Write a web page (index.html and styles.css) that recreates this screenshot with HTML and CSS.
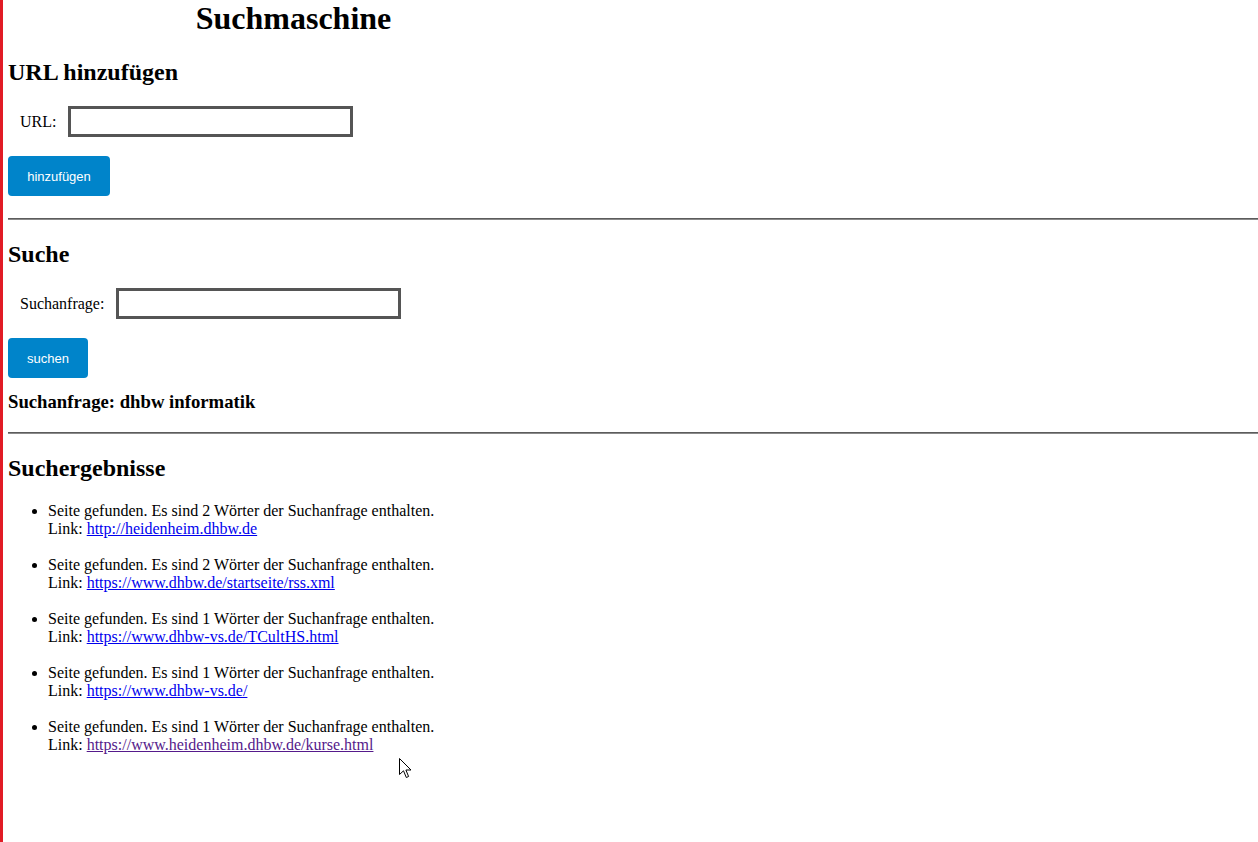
FILE: index.html
```html
<!DOCTYPE html>
<html lang="de">
<head>
<meta charset="utf-8">
<title>Suchmaschine</title>
<link rel="stylesheet" href="styles.css">
</head>
<body>
<h1 class="title">Suchmaschine</h1>

<section class="section">
  <h2 class="heading">URL hinzufügen</h2>
  <form class="form form-add">
    <div class="row">
      <label class="label" for="url">URL:</label>
      <input class="field" id="url" type="text">
    </div>
    <button class="btn btn-add" type="button">hinzufügen</button>
  </form>
</section>

<hr class="rule">

<section class="section">
  <h2 class="heading">Suche</h2>
  <form class="form form-search">
    <div class="row">
      <label class="label" for="q">Suchanfrage:</label>
      <input class="field" id="q" type="text">
    </div>
    <button class="btn btn-search" type="button">suchen</button>
  </form>
  <h3 class="query">Suchanfrage: dhbw informatik</h3>
</section>

<hr class="rule">

<section class="section">
  <h2 class="heading">Suchergebnisse</h2>
  <ul class="results">
    <li class="result">Seite gefunden. Es sind 2 Wörter der Suchanfrage enthalten.<br>Link: <a class="link" href="#">http://heidenheim.dhbw.de</a></li>
    <li class="result">Seite gefunden. Es sind 2 Wörter der Suchanfrage enthalten.<br>Link: <a class="link" href="#">https://www.dhbw.de/startseite/rss.xml</a></li>
    <li class="result">Seite gefunden. Es sind 1 Wörter der Suchanfrage enthalten.<br>Link: <a class="link" href="#">https://www.dhbw-vs.de/TCultHS.html</a></li>
    <li class="result">Seite gefunden. Es sind 1 Wörter der Suchanfrage enthalten.<br>Link: <a class="link" href="#">https://www.dhbw-vs.de/</a></li>
    <li class="result">Seite gefunden. Es sind 1 Wörter der Suchanfrage enthalten.<br>Link: <a class="link link-hover" href="#">https://www.heidenheim.dhbw.de/kurse.html</a></li>
  </ul>
</section>

<svg class="cursor" width="13" height="21" viewBox="0 0 13 21" aria-hidden="true">
  <path d="M0.5 0.5 L0.5 16.5 L4.5 12.8 L7.3 19.5 L9.6 18.5 L6.9 12 L12 12 Z" fill="#fff" stroke="#000" stroke-width="1" stroke-linejoin="miter"/>
</svg>
</body>
</html>
```

FILE: styles.css
```css
html {
  border-left: 3px solid #e11b25;
  min-height: 100%;
  box-sizing: border-box;
}

body {
  margin: 0 0 0 5px;
  font-family: "Liberation Serif", "Times New Roman", serif;
  font-size: 16px;
  line-height: 18px;
  color: #000;
  background: #fff;
  position: relative;
  min-height: 842px;
}

.title {
  width: 571px;
  margin: 0 0 21.44px;
  font-size: 32px;
  line-height: 37px;
  font-weight: bold;
  text-align: center;
}

.heading {
  font-size: 24px;
  line-height: 28px;
  font-weight: bold;
  margin: 19.92px 0;
}

.form {
  margin: 0;
}

.form-add {
  margin-bottom: 22px;
}

.form-search {
  margin-bottom: 13px;
}

.row {
  display: flex;
  align-items: center;
  margin-bottom: 19px;
}

.label {
  padding: 0 12px;
}

.field {
  box-sizing: border-box;
  width: 285px;
  height: 31px;
  border: 3px solid #555;
  margin: 0;
  padding: 2px 4px;
  font-family: "Liberation Sans", Arial, sans-serif;
  font-size: 13px;
  background: #fff;
}

.btn {
  display: block;
  height: 40px;
  border: none;
  border-radius: 4px;
  background: #0084ca;
  color: #fff;
  font-family: "Liberation Sans", Arial, sans-serif;
  font-size: 13px;
  margin: 0;
  cursor: pointer;
}

.btn-add {
  width: 102px;
}

.btn-search {
  width: 80px;
}

.query {
  font-size: 18.72px;
  line-height: 22px;
  font-weight: bold;
  margin: 0 0 18.5px;
}

.rule {
  margin: 0;
  height: 0;
  border: none;
  border-top: 1px solid #5c5c5c;
  border-bottom: 1px solid #8a8a8a;
}

.results {
  margin: 20px 0 0;
  padding-left: 40px;
}

.result {
  margin-bottom: 18px;
}

.link {
  color: #0000ee;
  text-decoration: underline;
}

.link-hover {
  color: #551a8b;
}

.cursor {
  position: absolute;
  left: 391px;
  top: 758px;
}
```
